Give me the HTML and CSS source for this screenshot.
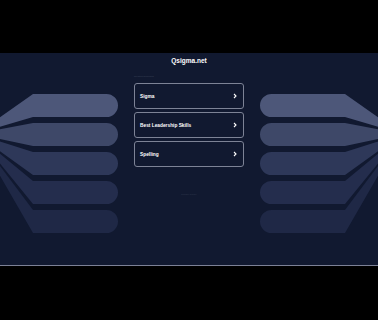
FILE: index.html
```html
<!DOCTYPE html>
<html lang="en">
<head>
    <meta charset="UTF-8">
    <title>Qsigma.net</title>
<link rel="stylesheet" href="styles.css">
</head>
<body>

<div class="top-band"></div>

<section class="main">
    <svg class="wings" width="126" height="212" viewBox="0 0 126 212">
        <path fill="#4d5779" d="M-24 81 L33 41 H106.5 A11.5 11.5 0 0 1 106.5 64 H33 Z"/>
        <path fill="#3e4868" d="M-24 81 L33 70 H106.5 A11.5 11.5 0 0 1 106.5 93 H33 Z"/>
        <path fill="#2e3859" d="M-24 81 L33 99 H106.5 A11.5 11.5 0 0 1 106.5 122 H33 Z"/>
        <path fill="#242d4d" d="M-24 81 L33 128 H106.5 A11.5 11.5 0 0 1 106.5 151 H33 Z"/>
        <path fill="#1f2846" d="M-24 81 L33 157 H106.5 A11.5 11.5 0 0 1 106.5 180 H33 Z"/>
    </svg>

    <div class="center">
        <h1 class="domain">Qsigma.net</h1>
        <p class="label">Related Searches</p>
        <div class="links">
            <a class="link" href="#">
                <span>Sigma</span>
                <svg width="4" height="6" viewBox="0 0 4 6"><path d="M1 1 L3 3 L1 5" fill="none" stroke="#fff" stroke-width="1.1"/></svg>
            </a>
            <a class="link" href="#">
                <span>Best Leadership Skills</span>
                <svg width="4" height="6" viewBox="0 0 4 6"><path d="M1 1 L3 3 L1 5" fill="none" stroke="#fff" stroke-width="1.1"/></svg>
            </a>
            <a class="link" href="#">
                <span>Spelling</span>
                <svg width="4" height="6" viewBox="0 0 4 6"><path d="M1 1 L3 3 L1 5" fill="none" stroke="#fff" stroke-width="1.1"/></svg>
            </a>
        </div>
        <p class="privacy">Privacy Policy</p>
    </div>

    <svg class="wings flip" width="126" height="212" viewBox="0 0 126 212">
        <path fill="#4d5779" d="M-24 81 L33 41 H106.5 A11.5 11.5 0 0 1 106.5 64 H33 Z"/>
        <path fill="#3e4868" d="M-24 81 L33 70 H106.5 A11.5 11.5 0 0 1 106.5 93 H33 Z"/>
        <path fill="#2e3859" d="M-24 81 L33 99 H106.5 A11.5 11.5 0 0 1 106.5 122 H33 Z"/>
        <path fill="#242d4d" d="M-24 81 L33 128 H106.5 A11.5 11.5 0 0 1 106.5 151 H33 Z"/>
        <path fill="#1f2846" d="M-24 81 L33 157 H106.5 A11.5 11.5 0 0 1 106.5 180 H33 Z"/>
    </svg>
</section>

<div class="rule"></div>

</body>
</html>
```

FILE: styles.css
```css
body {
  margin: 0;
  background-color: #000;
  font-family: "Liberation Sans", Arial, sans-serif;
}

.top-band {
  height: 53px;
}

.main {
  display: flex;
  height: 212px;
  background-color: #111930;
}

.wings {
  display: block;
  flex: none;
}

.flip {
  transform: scaleX(-1);
}

.center {
  flex: 1;
  display: flex;
  flex-direction: column;
  padding: 0 8px;
}

.domain {
  margin: 3px 0 0;
  text-align: center;
  color: #fff;
  font-size: 6.5px;
  line-height: 9px;
  font-weight: bold;
}

.label {
  margin: 10px 0 0;
  color: #3c4459;
  font-size: 2.5px;
  line-height: 4px;
}

.links {
  display: flex;
  flex-direction: column;
  gap: 3px;
  margin-top: 4px;
}

.link {
  display: flex;
  align-items: center;
  justify-content: space-between;
  height: 26px;
  box-sizing: border-box;
  padding: 0 6px 0 5px;
  border: 1px solid #7d8396;
  border-radius: 3px;
  color: #fff;
  text-decoration: none;
  font-size: 4.8px;
  font-weight: bold;
}

.link svg {
  display: block;
}

.privacy {
  margin: 26px 0 0;
  text-align: center;
  color: #353d52;
  font-size: 2.5px;
  line-height: 4px;
}

.rule {
  height: 1px;
  background-color: #7c8196;
}
```
